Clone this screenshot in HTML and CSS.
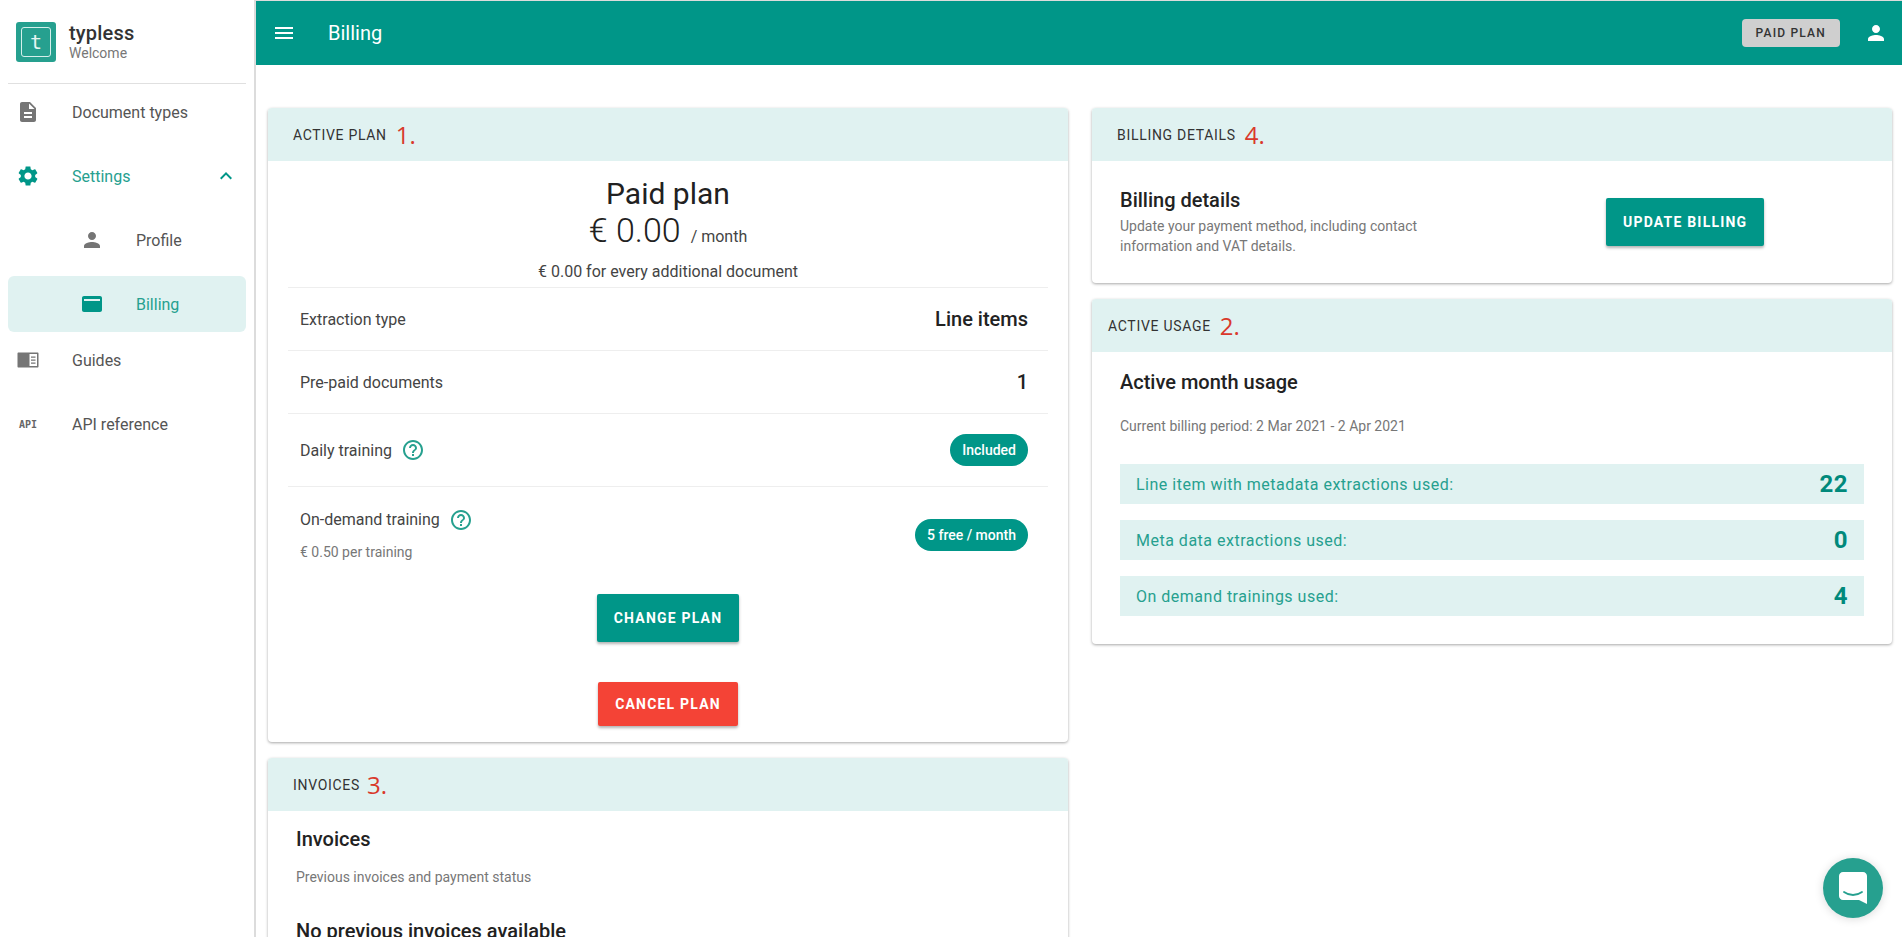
FILE: index.html
```html
<!DOCTYPE html>
<html lang="en">
<head>
  <meta charset="UTF-8" />
  <title>Billing - typless</title>
  <link rel="stylesheet" href="styles.css">
</head>
<body>
  <div class="app">

    <!-- Sidebar -->
    <aside class="sidebar">
      <div class="brand">
        <div class="brand-logo"><span>t</span></div>
        <div>
          <div class="brand-name">typless</div>
          <div class="brand-sub">Welcome</div>
        </div>
      </div>
      <nav class="menu">
        <a class="menu-item">
          <svg class="menu-icon" viewBox="0 0 24 24"><path d="M14 2H6c-1.1 0-2 .9-2 2v16c0 1.1.9 2 2 2h12c1.1 0 2-.9 2-2V8l-6-6zm2 16H8v-2h8v2zm0-4H8v-2h8v2zm-3-5V3.5L18.5 9H13z"/></svg>
          <span>Document types</span>
        </a>
        <a class="menu-item is-open">
          <svg class="menu-icon" viewBox="0 0 24 24"><path d="M19.14 12.94c.04-.3.06-.61.06-.94 0-.32-.02-.64-.07-.94l2.03-1.58c.18-.14.23-.41.12-.61l-1.92-3.32c-.12-.22-.37-.29-.59-.22l-2.39.96c-.5-.38-1.03-.7-1.62-.94l-.36-2.54c-.04-.24-.24-.41-.48-.41h-3.84c-.24 0-.43.17-.47.41l-.36 2.54c-.59.24-1.13.57-1.62.94l-2.39-.96c-.22-.08-.47 0-.59.22L2.74 8.87c-.12.21-.08.47.12.61l2.03 1.58c-.05.3-.09.63-.09.94s.02.64.07.94l-2.03 1.58c-.18.14-.23.41-.12.61l1.92 3.32c.12.22.37.29.59.22l2.39-.96c.5.38 1.03.7 1.62.94l.36 2.54c.05.24.24.41.48.41h3.84c.24 0 .44-.17.47-.41l.36-2.54c.59-.24 1.13-.56 1.62-.94l2.39.96c.22.08.47 0 .59-.22l1.92-3.32c.12-.22.07-.47-.12-.61l-2.01-1.58zM12 15.6c-1.98 0-3.6-1.62-3.6-3.6s1.62-3.6 3.6-3.6 3.6 1.62 3.6 3.6-1.62 3.6-3.6 3.6z"/></svg>
          <span>Settings</span>
          <svg class="menu-chevron" viewBox="0 0 24 24"><path d="M7.41 15.41 12 10.83l4.59 4.58L18 14l-6-6-6 6z"/></svg>
        </a>
        <a class="menu-item sub">
          <svg class="menu-icon" viewBox="0 0 24 24"><path d="M12 12c2.21 0 4-1.79 4-4s-1.79-4-4-4-4 1.79-4 4 1.79 4 4 4zm0 2c-2.67 0-8 1.34-8 4v2h16v-2c0-2.66-5.33-4-8-4z"/></svg>
          <span>Profile</span>
        </a>
        <a class="menu-item sub is-active">
          <svg class="menu-icon" viewBox="0 0 24 24"><path d="M20 4H4c-1.11 0-2 .89-2 2v12c0 1.11.89 2 2 2h16c1.11 0 2-.89 2-2V6c0-1.11-.89-2-2-2zm0 5H4V7h16v2z" transform="translate(0 0)"/></svg>
          <span>Billing</span>
        </a>
        <a class="menu-item">
          <svg class="menu-icon" viewBox="0 0 24 24"><path d="M2.5 4.500h19c.6 0 1 .4 1 1v13c0 .6-.4 1-1 1h-19c-.6 0-1-.4-1-1v-13c0-.6.4-1 1-1zm11 1.500v12h7.500V6h-7.500zm1.500 2.500h4.500v1.200H15V8.500zm0 3h4.500v1.200H15v-1.200zm0 3h4.500v1.200H15v-1.200z" fill-rule="evenodd"/></svg>
          <span>Guides</span>
        </a>
        <a class="menu-item">
          <span class="api-icon">API</span>
          <span>API reference</span>
        </a>
      </nav>
    </aside>

    <div class="content">
      <!-- Top bar -->
      <header class="topbar">
        <svg class="topbar-icon" viewBox="0 0 24 24"><path d="M3 18h18v-2H3v2zm0-5h18v-2H3v2zm0-7v2h18V6H3z"/></svg>
        <h1>Billing</h1>
        <div class="plan-chip">PAID PLAN</div>
        <svg class="topbar-icon user" viewBox="0 0 24 24"><path d="M12 12c2.21 0 4-1.79 4-4s-1.790-4-4-4-4 1.790-4 4 1.790 4 4 4zm0 2c-2.670 0-8 1.340-8 4v2h16v-2c0-2.660-5.330-4-8-4z"/></svg>
      </header>

      <main class="page">
        <div class="column">

          <section class="card">
            <div class="card-head"><span class="head-label wide">ACTIVE PLAN</span><span class="note">1.</span></div>
            <div class="plan-summary">
              <div class="plan-name">Paid plan</div>
              <div class="plan-price"><span class="amount">€ 0.00</span><span class="per">/ month</span></div>
              <div class="plan-extra">€ 0.00 for every additional document</div>
            </div>
            <div class="plan-row">
              <span>Extraction type</span><strong>Line items</strong>
            </div>
            <div class="plan-row">
              <span>Pre-paid documents</span><strong>1</strong>
            </div>
            <div class="plan-row tall">
              <span class="with-help">Daily training
                <svg class="help" viewBox="0 0 24 24"><path d="M11 18h2v-2h-2v2zm1-16C6.480 2 2 6.480 2 12s4.480 10 10 10 10-4.480 10-10S17.520 2 12 2zm0 18c-4.410 0-8-3.590-8-8s3.590-8 8-8 8 3.590 8 8-3.590 8-8 8zm0-14c-2.210 0-4 1.790-4 4h2c0-1.100.9-2 2-2s2 .9 2 2c0 2-3 1.750-3 5h2c0-2.250 3-2.500 3-5 0-2.210-1.790-4-4-4z"/></svg>
              </span>
              <span class="pill">Included</span>
            </div>
            <div class="plan-row last">
              <div>
                <span class="with-help">On-demand training
                  <svg class="help" viewBox="0 0 24 24"><path d="M11 18h2v-2h-2v2zm1-16C6.480 2 2 6.480 2 12s4.480 10 10 10 10-4.480 10-10S17.520 2 12 2zm0 18c-4.410 0-8-3.590-8-8s3.590-8 8-8 8 3.590 8 8-3.590 8-8 8zm0-14c-2.210 0-4 1.790-4 4h2c0-1.100.9-2 2-2s2 .9 2 2c0 2-3 1.750-3 5h2c0-2.250 3-2.500 3-5 0-2.210-1.790-4-4-4z"/></svg>
                </span>
                <div class="small-text">€ 0.50 per training</div>
              </div>
              <span class="pill">5 free / month</span>
            </div>
            <div class="plan-actions">
              <button class="btn">CHANGE PLAN</button>
              <button class="btn btn-red">CANCEL PLAN</button>
            </div>
          </section>

          <section class="card">
            <div class="card-head"><span class="head-label">INVOICES</span><span class="note near">3.</span></div>
            <div class="invoices">
              <h2>Invoices</h2>
              <div class="small-text">Previous invoices and payment status</div>
              <h3>No previous invoices available</h3>
            </div>
          </section>
        </div>

        <div class="column">
          <section class="card">
            <div class="card-head"><span class="head-label">BILLING DETAILS</span><span class="note">4.</span></div>
            <div class="billing-body">
              <div class="billing-text">
                <h2>Billing details</h2>
                <div class="small-text">Update your payment method, including contact information and VAT details.</div>
              </div>
              <button class="btn">UPDATE BILLING</button>
            </div>
          </section>

          <section class="card">
            <div class="card-head narrow"><span class="head-label">ACTIVE USAGE</span><span class="note">2.</span></div>
            <div class="usage">
              <h2>Active month usage</h2>
              <div class="small-text period">Current billing period: 2 Mar 2021 - 2 Apr 2021</div>
              <div class="usage-row"><span>Line item with metadata extractions used:</span><strong>22</strong></div>
              <div class="usage-row"><span>Meta data extractions used:</span><strong>0</strong></div>
              <div class="usage-row"><span>On demand trainings used:</span><strong>4</strong></div>
            </div>
          </section>
        </div>
      </main>
    </div>
  </div>

  <!-- Chat launcher -->
  <div class="chat">
    <svg viewBox="0 0 28 32"><path d="M4 0h20c2.200 0 4 1.800 4 4v28l-8-4H4c-2.200 0-4-1.800-4-4V4c0-2.200 1.800-4 4-4z" fill="#fff"/><path d="M5 20c5.500 4 12.500 4 18 0" fill="none" stroke="#26a08f" stroke-width="1.800" stroke-linecap="round"/></svg>
  </div>
</body>
</html>
```

FILE: styles.css
```css
* {
  box-sizing: border-box;
}

html, body {
  height: 100%;
}

body {
  margin: 0;
  overflow: hidden;
  font-family: Roboto, "Liberation Sans", sans-serif;
  font-size: 16px;
  color: #212121;
  background: #fff;
}

.app {
  display: flex;
  height: 937px;
}

/* Sidebar */

.sidebar {
  width: 256px;
  flex: none;
  border-right: 2px solid #dcdcdc;
  padding: 0 8px;
}

.brand {
  display: flex;
  align-items: center;
  gap: 13px;
  height: 84px;
  padding: 0 8px;
  border-bottom: 1px solid #e0e0e0;
}

.brand-logo {
  width: 40px;
  height: 40px;
  padding: 5px;
  border-radius: 3px;
  background: #26a08f;
}

.brand-logo span {
  display: flex;
  align-items: center;
  justify-content: center;
  height: 30px;
  border: 1.500px solid #d5efeb;
  border-radius: 3px;
  font-family: "DejaVu Sans Mono", monospace;
  font-size: 20px;
  color: #e6f5f2;
}

.brand-name {
  font-size: 20px;
  font-weight: 500;
  line-height: 22px;
  letter-spacing: .2px;
  color: #333;
}

.brand-sub {
  font-size: 14px;
  line-height: 18px;
  color: #777;
}

.menu {
  display: flex;
  flex-direction: column;
  gap: 8px;
  padding-top: 0;
}

.menu-item {
  display: flex;
  align-items: center;
  height: 56px;
  padding-left: 8px;
  border-radius: 6px;
  color: #555;
  fill: #757575;
}

.menu-icon {
  width: 24px;
  height: 24px;
  margin-right: 32px;
  flex: none;
}

.menu-item.sub {
  padding-left: 72px;
}

.menu-item.sub .menu-icon {
  margin-right: 32px;
}

.menu-item.is-open,
.menu-item.is-active {
  color: #26a08f;
  fill: #009688;
}

.menu-item.is-active {
  background: #e0f2f1;
  margin-bottom: -8px;
}

.menu-chevron {
  width: 24px;
  height: 24px;
  margin-left: auto;
  margin-right: 8px;
}

.api-icon {
  width: 24px;
  margin-right: 32px;
  text-align: center;
  font-family: "DejaVu Sans Mono", monospace;
  font-size: 10px;
  font-weight: 700;
  color: #666;
}

/* Top bar */

.content {
  flex: 1;
  min-width: 0;
}

.topbar {
  display: flex;
  align-items: center;
  height: 65px;
  padding: 0 14px 0 16px;
  background: #009688;
  border-top: 1px solid #dcdcdc;
  color: #fff;
  fill: #fff;
}

.topbar h1 {
  margin: 0 0 0 32px;
  font-size: 20px;
  font-weight: 400;
}

.topbar-icon {
  width: 24px;
  height: 24px;
}

.topbar-icon.user {
  margin-left: 24px;
}

.plan-chip {
  margin-left: auto;
  padding: 0 14px;
  height: 28px;
  line-height: 28px;
  border-radius: 4px;
  background: #cfcfcf;
  color: #333;
  font-size: 12px;
  font-weight: 500;
  letter-spacing: 1.200px;
}

/* Page */

.page {
  display: flex;
  gap: 24px;
  padding: 43px 10px 0 12px;
}

.column {
  width: 800px;
  display: flex;
  flex-direction: column;
  gap: 16px;
}

.card {
  background: #fff;
  border-radius: 4px;
  box-shadow: 0 1px 3px rgba(0,0,0,.35);
}

.card-head {
  display: flex;
  align-items: center;
  height: 53px;
  padding: 0 25px;
  background: #e0f2f1;
  border-radius: 4px 4px 0 0;
}

.card-head.narrow {
  padding: 0 16px;
}

.head-label {
  font-size: 14px;
  letter-spacing: .7px;
  color: #333;
}

.note {
  margin-left: 9px;
  font-family: "Open Sans", sans-serif;
  font-size: 24px;
  color: #d9392b;
}

.note.near {
  margin-left: 7px;
}

h2 {
  margin: 0;
  font-size: 20px;
  font-weight: 500;
  color: #222;
}

.small-text {
  font-size: 14px;
  line-height: 20px;
  color: #777;
}

/* Active plan */

.plan-summary {
  text-align: center;
  padding-top: 16px;
  height: 127px;
  margin: 0 20px;
  border-bottom: 1px solid #eee;
}

.plan-name {
  font-size: 30px;
  font-weight: 400;
  line-height: 34px;
}

.plan-price {
  line-height: 38px;
}

.amount {
  font-size: 34px;
  font-weight: 300;
}

.per {
  margin-left: 10px;
  color: #444;
}

.plan-extra {
  margin-top: 6px;
  color: #444;
}

.plan-row {
  display: flex;
  align-items: center;
  justify-content: space-between;
  height: 63px;
  margin: 0 20px;
  padding: 0 20px 0 12px;
  border-bottom: 1px solid #eee;
  color: #444;
}

.plan-row strong {
  font-size: 20px;
  font-weight: 500;
  color: #222;
}

.plan-row.tall {
  height: 73px;
}

.plan-row.last {
  height: 95px;
  border-bottom: 0;
}

.plan-row.last .small-text {
  margin-top: 10px;
}

.with-help {
  display: inline-flex;
  align-items: center;
  gap: 9px;
}

.help {
  width: 24px;
  height: 24px;
  fill: #26a08f;
}

.pill {
  padding: 0 12px;
  height: 32px;
  line-height: 32px;
  border-radius: 16px;
  background: #009688;
  color: #fff;
  font-size: 14px;
  font-weight: 500;
}

.plan-actions {
  display: flex;
  flex-direction: column;
  align-items: center;
  gap: 40px;
  padding: 12px 0 16px;
}

.btn {
  height: 48px;
  padding: 0 17px;
  border: 0;
  border-radius: 2px;
  background: #009688;
  color: #fff;
  font-family: inherit;
  font-size: 14px;
  font-weight: 700;
  letter-spacing: 1.200px;
  box-shadow: 0 2px 3px rgba(0,0,0,.3);
}

.btn-red {
  height: 44px;
  background: #f44336;
}

/* Invoices */

.invoices {
  padding: 16px 28px;
}

.invoices h2 {
  font-weight: 500;
}

.invoices .small-text {
  margin-top: 16px;
}

.invoices h3 {
  margin: 32px 0 0;
  font-size: 20px;
  font-weight: 500;
}

/* Billing details */

.billing-body {
  display: flex;
  align-items: center;
  height: 122px;
  padding: 0 28px;
}

.billing-text {
  width: 486px;
}

.billing-text .small-text {
  width: 340px;
  margin-top: 4px;
}

/* Usage */

.usage {
  padding: 16px 28px 28px;
}

.usage h2 {
  line-height: 28px;
}

.period {
  margin: 20px 0 28px;
}

.usage-row {
  display: flex;
  align-items: center;
  justify-content: space-between;
  height: 40px;
  margin-top: 16px;
  padding: 0 16px;
  background: #e0f2f1;
  color: #26a08f;
  letter-spacing: .5px;
}

.usage-row strong {
  font-size: 24px;
  font-weight: 700;
  color: #00897b;
}

/* Chat */

.chat {
  position: fixed;
  right: 19px;
  bottom: 19px;
  width: 60px;
  height: 60px;
  border-radius: 50%;
  background: #26a08f;
  box-shadow: 0 1px 10px rgba(0,0,0,.15);
  display: flex;
  align-items: center;
  justify-content: center;
}

.chat svg {
  width: 28px;
  height: 32px;
}
```
